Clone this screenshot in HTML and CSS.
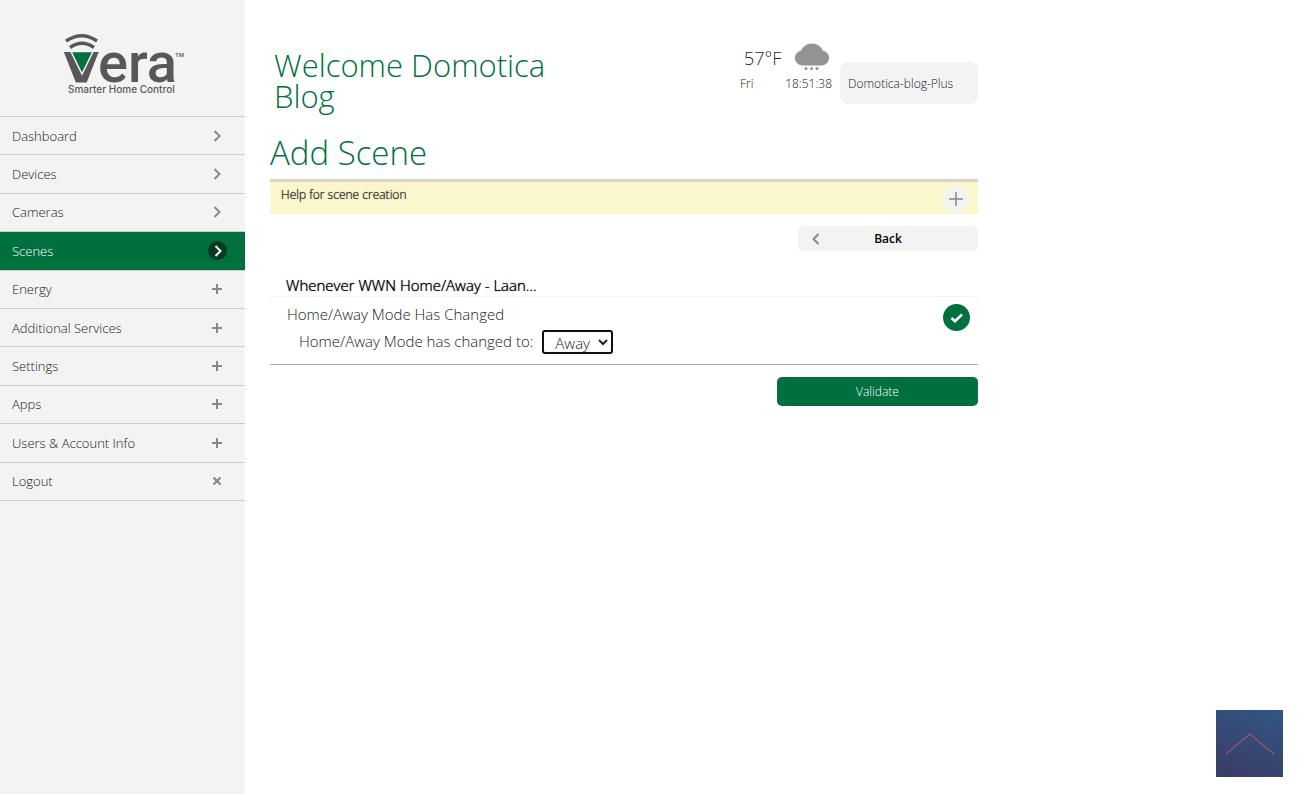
FILE: index.html
```html
<!DOCTYPE html>
<html lang="en">
<head>
<meta charset="utf-8">
<meta name="viewport" content="width=device-width, initial-scale=1">
<title>Vera - Add Scene</title>
<link rel="stylesheet" href="styles.css">
</head>
<body>
<svg class="sprite" aria-hidden="true">
  <symbol id="chevron" viewBox="0 0 12 12"><path d="M3.500 1 8.500 6l-5 5" fill="none" stroke="currentColor" stroke-width="2"/></symbol>
  <symbol id="plus" viewBox="0 0 12 12"><path d="M6 1v10M1 6h10" fill="none" stroke="currentColor" stroke-width="2"/></symbol>
  <symbol id="cross" viewBox="0 0 12 12"><path d="M2.500 2.500l7 7M9.500 2.500l-7 7" fill="none" stroke="currentColor" stroke-width="2.200"/></symbol>
</svg>
<div class="app">
  <aside class="sidebar">
    <a class="logo" href="#">
      <svg class="logo-mark" viewBox="0 0 130 66" role="img" aria-label="Vera Smarter Home Control">
        <path d="M6 9Q22-1.500 37 9" fill="none" stroke="#58585a" stroke-width="3.400"/>
        <path d="M10 15.500Q22 7 34 15.500" fill="none" stroke="#58585a" stroke-width="3.400"/>
        <text class="logo-v" x="3" y="50">v</text>
        <text class="logo-era" x="38" y="50">era</text>
        <path d="M11 19.500h22L22 42z" fill="#00703f" stroke="#f3f3f3" stroke-width="1.500"/>
        <text class="logo-tm" x="115" y="25">TM</text>
        <text class="logo-tag" x="8" y="61">Smarter Home Control</text>
      </svg>
    </a>
    <nav>
      <ul class="menu">
        <li><a href="#">Dashboard<svg class="icon"><use href="#chevron"/></svg></a></li>
        <li><a href="#">Devices<svg class="icon"><use href="#chevron"/></svg></a></li>
        <li><a href="#">Cameras<svg class="icon"><use href="#chevron"/></svg></a></li>
        <li><a class="active" href="#" aria-current="page">Scenes<span class="dot"><svg class="icon"><use href="#chevron"/></svg></span></a></li>
        <li><a href="#">Energy<svg class="icon"><use href="#plus"/></svg></a></li>
        <li><a href="#">Additional Services<svg class="icon"><use href="#plus"/></svg></a></li>
        <li><a href="#">Settings<svg class="icon"><use href="#plus"/></svg></a></li>
        <li><a href="#">Apps<svg class="icon"><use href="#plus"/></svg></a></li>
        <li><a href="#">Users &amp; Account Info<svg class="icon"><use href="#plus"/></svg></a></li>
        <li><a href="#">Logout<svg class="icon"><use href="#cross"/></svg></a></li>
      </ul>
    </nav>
  </aside>
  <main class="main">
    <header class="top">
      <h1 class="welcome">Welcome Domotica Blog</h1>
      <div class="weather">
        <span class="temp">57°F</span>
        <svg class="cloud" viewBox="0 0 36 28" aria-hidden="true">
          <path d="M8 22.500a7.500 7.500 0 0 1-.8-14.900C9 3.500 13 .5 18 .5s9 3 10.700 7.100A7.500 7.500 0 0 1 28 22.500z" fill="#949293"/>
          <g fill="#949293"><circle cx="12" cy="25.500" r="1.500"/><circle cx="17.500" cy="25.500" r="1.500"/><circle cx="23" cy="25.500" r="1.500"/></g>
        </svg>
        <span class="small">Fri</span>
        <time class="small time">18:51:38</time>
      </div>
      <button class="controller" type="button">Domotica-blog-Plus</button>
    </header>
    <h2 class="title">Add Scene</h2>
    <section class="help">
      <span>Help for scene creation</span>
      <button class="help-toggle" type="button" aria-label="Show help"><svg class="help-icon" viewBox="0 0 14 14"><path d="M7 0v14M0 7h14" stroke="#888" stroke-width="1.500"/></svg></button>
    </section>
    <button class="back" type="button"><svg class="icon flip"><use href="#chevron"/></svg>Back</button>
    <form class="trigger">
      <h3 class="trigger-name">Whenever WWN Home/Away - Laan...</h3>
      <div class="trigger-body">
        <div class="fields">
          <p class="line">Home/Away Mode Has Changed</p>
          <div class="line option">
            <label for="mode">Home/Away Mode has changed to:</label>
            <select class="mode" id="mode"><option>Away</option><option>Home</option></select>
          </div>
        </div>
        <button class="check" type="button" aria-label="Selected"><svg class="check-icon" viewBox="0 0 14 12"><path d="M1.500 6 5 9.200 12 2.500" fill="none" stroke="#fff" stroke-width="2.500"/></svg></button>
      </div>
    </form>
    <button class="validate" type="button">Validate</button>
  </main>
</div>
<a class="to-top" href="#" aria-label="Back to top"><svg class="to-top-icon" viewBox="0 0 50 22"><path d="M1 21 25 1l24 20" fill="none" stroke="#d9566b" stroke-width="1"/></svg></a>
</body>
</html>
```
FILE: styles.css
```css
* { box-sizing: border-box; }
body {
  margin: 0;
  font-family: "Open Sans", "Noto Sans", sans-serif;
  font-weight: 300;
  font-size: 13px;
  color: #222;
  background: #fff;
}
button, select { font: inherit; color: inherit; border: 0; padding: 0; margin: 0; cursor: pointer; }
h1, h2, h3, p, ul { margin: 0; padding: 0; font-weight: 300; }
a { color: inherit; text-decoration: none; }
.sprite { display: none; }
.app { display: flex; min-height: 100vh; }
.sidebar { flex: 0 0 245px; background: #f3f3f3; }
.logo { display: block; padding: 32px 0 18px 60px; }
.logo-mark { display: block; width: 130px; height: 66px; overflow: visible; }
.logo-v, .logo-era, .logo-tm, .logo-tag { fill: #58585a; }
.logo-v { font: 700 56px "DejaVu Sans", sans-serif; }
.logo-era { font: 500 56px Roboto, sans-serif; }
.logo-tm { font: 500 6px Roboto, sans-serif; }
.logo-tag { font: 500 10px Inter, sans-serif; }
.menu { display: grid; grid-auto-rows: 1fr; height: 385px; list-style: none; border-top: 1px solid #ccc; }
.menu li { display: flex; border-bottom: 1px solid #ccc; }
.menu a { flex: 1; display: flex; align-items: center; justify-content: space-between; padding: 0 22px 0 12px; }
.menu .active { background: #00703f; color: #fff; padding-right: 18px; }
.icon { width: 12px; height: 12px; color: #888; }
.dot { display: flex; align-items: center; justify-content: center; width: 19px; height: 19px; border-radius: 50%; background: #053b22; }
.dot .icon { color: #fff; }
.flip { transform: rotate(180deg); }
.main { flex: 1; max-width: 758px; padding: 42px 25px 24px; display: flex; flex-direction: column; }
.top { display: flex; align-items: flex-start; }
.welcome { flex: 1; padding: 8px 150px 0 4px; font-size: 31px; line-height: 31px; color: #00703f; }
.weather { display: grid; grid-template-columns: 1fr auto; width: 92px; justify-items: start; }
.temp { font-size: 18px; line-height: 32px; padding-left: 4px; }
.cloud { width: 36px; height: 28px; justify-self: end; margin: 1px 2px 0 0; }
.small { font-size: 12px; line-height: 20px; }
.controller { width: 138px; height: 42px; margin: 20px 0 0 8px; padding: 0 8px; border-radius: 8px; background: #f3f3f3; text-align: left; font-size: 12px; }
.title { margin-top: 20px; font-size: 33px; line-height: 42px; color: #00703f; }
.help { display: flex; justify-content: space-between; margin-top: 5px; padding: 4px 9px 2px 11px; border-top: 3px solid #d5d5ca; background: #fbf7cd; font-size: 12px; color: #111; text-shadow: 0 0 1px #555; height: 35px; }
.help-toggle { display: grid; place-items: center; width: 26px; height: 26px; border-radius: 50%; background: #f3f3f3; }
.help-icon { width: 14px; height: 14px; }
.back { display: grid; grid-template-columns: 36px 1fr 36px; align-items: center; justify-items: center; align-self: flex-end; width: 180px; height: 25px; margin-top: 12px; border-radius: 5px; background: #f3f3f3; color: #000; font-size: 12px; font-weight: 600; }
.trigger { margin-top: 23px; border-bottom: 1px solid #8fb5a2; font-size: 15px; }
.trigger-name { padding-left: 16px; font-size: 15px; line-height: 22px; color: #000; text-shadow: 0 0 1px #000; border-bottom: 1px solid #f3f3f3; }
.trigger-body { display: flex; justify-content: space-between; padding: 4px 8px 10px 17px; }
.fields { display: grid; gap: 1px; }
.line { line-height: 26px; }
.option { display: flex; align-items: flex-end; gap: 9px; padding-left: 12px; }
.mode { width: 71px; height: 24px; padding-left: 7px; border: 2px solid #101010; border-radius: 3px; background: #fff; line-height: 20px; }
.check { display: grid; place-items: center; width: 27px; height: 27px; margin-top: 3px; border-radius: 50%; background: #00703f; }
.check-icon { width: 14px; height: 12px; }
.validate { align-self: flex-end; width: 201px; height: 29px; margin-top: 12px; border-radius: 5px; background: #00703f; color: #fff; font-size: 12px; }
.to-top { position: fixed; right: 17px; bottom: 17px; display: grid; place-items: center; width: 67px; height: 67px; background: linear-gradient(200deg, #315783, #3a3b65); }
.to-top-icon { width: 50px; height: 22px; }
```
